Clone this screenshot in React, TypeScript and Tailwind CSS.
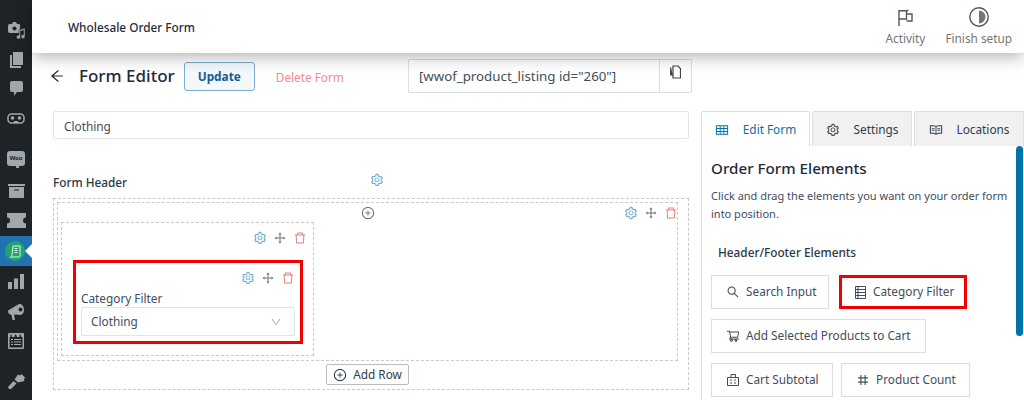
import { ReactNode } from "react";
import {
  AiOutlineArrowLeft,
  AiOutlineDelete,
  AiOutlineDown,
  AiOutlineDrag,
  AiOutlineNumber,
  AiOutlinePlusCircle,
  AiOutlineRead,
  AiOutlineSearch,
  AiOutlineSetting,
  AiOutlineShoppingCart,
  AiOutlineTable,
} from "react-icons/ai";

const grey = "#a3a7ab";

const SideItem = ({ h, children }: { h: string; children: ReactNode }) => (
  <div className={`${h} flex items-center justify-center`}>{children}</div>
);

const Sidebar = () => (
  <aside className="w-8 h-full shrink-0 bg-[#1d2327] pt-4">
    <SideItem h="h-[29px]">
      <svg width="19" height="17" viewBox="0 0 19 17" fill={grey}>
        <path d="M3 2h2l1-2h3l1 2h2a1 1 0 0 1 1 1v7a1 1 0 0 1-1 1H3a2 2 0 0 1-2-2V4a2 2 0 0 1 2-2z" />
        <circle cx="7.5" cy="6.5" r="2" fill="#1d2327" />
        <path d="M12 8l6-2v8.5a2 2 0 1 1-1.5-1.8V8.3L13.500 9.300V15a2 2 0 1 1-1.500-1.800z" stroke="#1d2327" strokeWidth=".5" />
      </svg>
    </SideItem>
    <SideItem h="h-[29px]">
      <svg width="13" height="16" viewBox="0 0 13 16" fill={grey}>
        <rect x="3" width="10" height="13" />
        <path d="M0 3h2v11h9v2H0z" />
      </svg>
    </SideItem>
    <SideItem h="h-[29px]">
      <svg width="13" height="15" viewBox="0 0 13 15" fill={grey}>
        <path d="M2 0h9a2 2 0 0 1 2 2v7a2 2 0 0 1-2 2H7l-3 4v-4H2a2 2 0 0 1-2-2V2a2 2 0 0 1 2-2z" />
      </svg>
    </SideItem>
    <SideItem h="h-[30px]">
      <svg width="18" height="11" viewBox="0 0 18 11">
        <rect x="1" y="1" width="16" height="9" rx="3.500" fill="none" stroke={grey} strokeWidth="1.500" />
        <circle cx="5.500" cy="5" r="1.800" fill={grey} />
        <circle cx="12.500" cy="5" r="1.800" fill={grey} />
        <path d="M7 8h4v2H7z" fill={grey} />
      </svg>
    </SideItem>
    <div className="h-[11px]" />
    <SideItem h="h-[28px]">
      <div className="relative flex h-[15px] w-[18px] items-center justify-center rounded-[3px] bg-[#a3a7ab]">
        <span className="text-[6px] font-bold leading-none text-[#1d2327]">Woo</span>
        <span className="absolute -bottom-[2px] left-[9px] h-[3px] w-[3px] bg-[#a3a7ab]" />
      </div>
    </SideItem>
    <div className="h-[4px]" />
    <SideItem h="h-[29px]">
      <svg width="17" height="14" viewBox="0 0 17 14" fill={grey}>
        <rect width="17" height="2" />
        <path d="M1 3h15v11H1z" />
        <rect x="6" y="5.500" width="5" height="1" fill="#1d2327" />
      </svg>
    </SideItem>
    <SideItem h="h-[31px]">
      <svg width="19" height="15" viewBox="0 0 19 15" fill={grey}>
        <path d="M0 0h19v4.500a3 3 0 0 0 0 6V15H0v-4.500a3 3 0 0 0 0-6z" />
      </svg>
    </SideItem>
    <div className="relative flex h-[30px] items-center justify-center bg-[#2271b1]">
      <div className="flex h-5 w-5 -translate-x-[1px] items-center justify-center rounded-full bg-[#1fa56f]">
        <svg width="12" height="13" viewBox="0 0 12 13" fill="none" stroke="#dff5ea" strokeWidth="1">
          <path d="M4 1h7v8a2 2 0 0 1-2 3H1.500c1-.5 1.500-1 1.500-2zM5.500 3.500h3M5.500 5.500h3M5.500 7.500h3" />
        </svg>
      </div>
      <span className="absolute right-0 top-[8px] h-0 w-0 border-y-[7px] border-r-[7px] border-y-transparent border-r-white" />
    </div>
    <SideItem h="h-[30px]">
      <svg width="16" height="15" viewBox="0 0 16 15" fill={grey}>
        <rect y="8" width="4" height="7" />
        <rect x="6" y="4.500" width="4" height="10.500" />
        <rect x="12" width="4" height="15" />
      </svg>
    </SideItem>
    <SideItem h="h-[30px]">
      <svg width="17" height="17" viewBox="0 0 17 17" fill={grey}>
        <path d="M0 7.500 11 1a4.500 5.500 0 0 1 5 5.500A4.500 5.500 0 0 1 12 12l-4-.5-2 .5 1 5H4.500L3.500 12 .5 10.500z" />
        <circle cx="12.500" cy="6.500" r="2" fill="#1d2327" />
      </svg>
    </SideItem>
    <SideItem h="h-[29px]">
      <svg width="16" height="16" viewBox="0 0 16 16" fill={grey}>
        <path fillRule="evenodd" d="M1 0h14a1 1 0 0 1 1 1v14a1 1 0 0 1-1 1H1a1 1 0 0 1-1-1V1a1 1 0 0 1 1-1zm.5 4v10.500h13V4h-1l-1-2.500h-1L11.500 4H9L8 1.500H7L6.500 4H4L3.500 1.500h-1L2.500 4z" />
        <path d="M3 6h2v1H3zM6 6h7v1H6zM3 8.500h2v1H3zM6 8.500h7v1H6zM3 11h2v1H3zM6 11h7v1H6z" />
      </svg>
    </SideItem>
    <div className="h-[11px]" />
    <SideItem h="h-[30px]">
      <svg width="17" height="16" viewBox="0 0 17 16" fill={grey}>
        <path d="M0 14 5.500 8l3 2.500L3 16H1z" />
        <path d="M6.500 6.500 10 1.500l2 1 1.500-1.500L17 4.500l-1 2 .5 1.500-6.500 1.500z" />
      </svg>
    </SideItem>
  </aside>
);

const TopBar = () => (
  <header className="relative z-10 flex h-[53px] shrink-0 items-start justify-between bg-white pl-9 pr-3 shadow-[0_3px_16px_rgba(0,0,0,0.32)]">
    <span className="mt-[18px] text-[11.8px] font-medium leading-[18px] text-[#1e2b3a]">Wholesale Order Form</span>
    <div className="flex gap-[20px] pt-[6px] text-[11.8px] leading-[12px] text-[#757575]">
      <div className="flex flex-col items-center">
        <div className="flex h-[22px] items-center">
          <svg width="15" height="17" viewBox="0 0 15 17" fill="none" stroke="#50575e" strokeWidth="1.400">
            <path d="M1 17V1.700h7.500v3.300h5.500v7H8.500" />
            <path d="M1 10h7.500V5" />
            <circle cx="9.500" cy="1.500" r="1" fill="#d63638" stroke="none" />
          </svg>
        </div>
        <span className="mt-[4px]">Activity</span>
      </div>
      <div className="flex flex-col items-center">
        <div className="flex h-[22px] items-center">
          <svg width="20" height="20" viewBox="0 0 20 20">
            <circle cx="10" cy="10" r="9.200" fill="none" stroke="#50575e" strokeWidth="1.400" />
            <path d="M10 3.500a6.500 6.500 0 0 1 0 13z" fill="#757575" />
          </svg>
        </div>
        <span className="mt-[4px]">Finish setup</span>
      </div>
    </div>
  </header>
);

const ItemTools = () => (
  <div className="flex items-center gap-[6px]">
    <AiOutlineSetting size={14} className="text-[#62a9c9]" />
    <AiOutlineDrag size={14} className="text-[#6f7478]" />
    <AiOutlineDelete size={14} className="text-[#e08080]" />
  </div>
);

const Element = ({ icon, label, w, red = false }: { icon: ReactNode; label: string; w: string; red?: boolean }) => (
  <div
    className={`${w} flex h-[34px] items-center bg-white text-[11.8px] text-[#3f4d5c] ${
      red ? "gap-[7px] border-[3px] border-[#f00000] pl-[13px]" : "gap-[6px] border border-[#dcdfe2] pl-[14px]"
    }`}
  >
    {icon}
    <span>{label}</span>
  </div>
);

const Editor = () => (
  <div className="w-[636px] shrink-0">
    <div className="h-[28px] rounded-[2px] border border-[#e2e4e7] bg-white pl-[10px] pt-[1px] text-[11.8px] leading-[26px] text-[#3f4d5c]">
      Clothing
    </div>
    <div className="mt-[35px] flex h-[16px] items-center text-[11.8px] font-medium text-[#2b3744]">
      <span className="w-[317px] pt-[2px]">Form Header</span>
      <AiOutlineSetting size={14} className="-mt-[4px] text-[#62a9c9]" />
    </div>
    <div className="mt-[8px] h-[192px] border border-dashed border-[#c9c9c9] p-[3px]">
      <div className="h-[159px] w-[621px] border border-dashed border-[#c9c9c9] pl-[3px]">
        <div className="flex h-[19px] items-center justify-end">
          <AiOutlinePlusCircle size={14} className="mr-[249px] text-[#6f7478]" />
          <div className="-mr-[1px]">
            <ItemTools />
          </div>
        </div>
        <div className="h-[134px] w-[253px] border border-dashed border-[#c9c9c9] pl-[11px]">
          <div className="flex h-[37px] items-center justify-end pb-[7px] pr-[6px]">
            <ItemTools />
          </div>
          <div className="h-[84px] w-[230px] border-[3px] border-[#f00000] px-[5px]">
            <div className="flex h-[27px] items-center justify-end pt-[3px]">
              <ItemTools />
            </div>
            <div className="text-[11.8px] leading-[16px] text-[#3f4d5c]">Category Filter</div>
            <div className="mt-[1px] flex h-[29px] items-center justify-between rounded-[2px] border border-[#e2e4e7] pl-[9px] pr-[12px] text-[11.8px] text-[#3f4d5c]">
              <span className="pt-[1px]">Clothing</span>
              <AiOutlineDown size={12} className="text-[#a8adb1]" />
            </div>
          </div>
        </div>
      </div>
      <div className="mt-[3px] flex justify-center">
        <div className="ml-[-7px] flex h-[21px] w-[83px] items-center justify-center gap-[6px] rounded-[2px] border border-[#b9bdc1] text-[11.8px] text-[#2f3d4d]">
          <AiOutlinePlusCircle size={14} />
          Add Row
        </div>
      </div>
    </div>
  </div>
);

const Tab = ({ icon, label, w, active = false }: { icon: ReactNode; label: string; w: string; active?: boolean }) => (
  <div
    className={`${w} flex h-[35px] items-center justify-center gap-[14px] rounded-t-[2px] border border-b-0 border-[#dcdfe2] pt-[1px] text-[11.8px] ${
      active ? "bg-white text-[#0073aa]" : "bg-[#f1f1f1] text-[#2f3d4d]"
    }`}
  >
    {icon}
    {label}
  </div>
);

const Panel = () => (
  <div className="w-[323px] shrink-0">
    <div className="flex gap-[2px]">
      <Tab active w="w-[109px]" label="Edit Form" icon={<AiOutlineTable size={14} />} />
      <Tab w="w-[100px]" label="Settings" icon={<AiOutlineSetting size={14} />} />
      <Tab w="w-[110px]" label="Locations" icon={<AiOutlineRead size={14} />} />
    </div>
    <div className="relative h-[260px] border-l border-[#dcdfe2] pl-[9px] pt-[11px]">
      <span className="absolute right-[1px] top-0 h-[190px] w-[7px] rounded-full bg-[#0073aa]" />
      <h2 className="text-[15.200px] font-medium leading-[22px] text-[#1e2b3a]">Order Form Elements</h2>
      <p className="mt-[8px] w-[300px] text-[11px] leading-[18px] text-[#3f4d5c]">
        Click and drag the elements you want on your order form into position.
      </p>
      <div className="mt-[20px] pl-[7px] text-[11.8px] font-medium leading-[18px] text-[#2b3744]">Header/Footer Elements</div>
      <div className="mt-[14px] flex gap-[10px]">
        <Element w="w-[118px]" label="Search Input" icon={<AiOutlineSearch size={14} />} />
        <Element
          red
          w="w-[128px]"
          label="Category Filter"
          icon={
            <svg width="11" height="13" viewBox="0 0 11 13" fill="none" stroke="#3f4d5c" strokeWidth="1">
              <path d="M.500.500h10v12H.500zM.500 3.500h10M.500 6.500h10M.500 9.500h10M3 .500v12" />
            </svg>
          }
        />
      </div>
      <div className="mt-[10px]">
        <Element w="w-[215px]" label="Add Selected Products to Cart" icon={<AiOutlineShoppingCart size={14} />} />
      </div>
      <div className="mt-[10px] flex gap-[8px]">
        <Element
          w="w-[122px]"
          label="Cart Subtotal"
          icon={
            <svg width="14" height="14" viewBox="0 0 14 14" fill="none" stroke="#3f4d5c" strokeWidth="1">
              <path d="M1.500 4.500h11v8h-11zM5 4.500v-3h4.500v3M4 7h2M8 7h2M4 10h2M8 10h2" />
            </svg>
          }
        />
        <Element w="w-[129px]" label="Product Count" icon={<AiOutlineNumber size={14} />} />
      </div>
    </div>
  </div>
);

export default function App() {
  return (
    <div className="flex h-[400px] w-[1024px] overflow-hidden bg-white font-['Noto_Sans',sans-serif]">
      <Sidebar />
      <main className="flex min-w-0 flex-1 flex-col">
        <TopBar />
        <div className="flex h-[40px] items-start pl-[17px] pt-[6px]">
          <AiOutlineArrowLeft size={16} className="mt-[9px] text-[#1e2b3a]" />
          <span className="ml-[14px] mt-[5px] text-[17px] font-medium leading-[24px] text-[#1e2b3a]">Form Editor</span>
          <div className="ml-[9px] mt-[3px] flex h-[29px] w-[71px] items-center justify-center rounded-[3px] border border-[#79add0] bg-[#f5f8fa] text-[11.8px] font-bold text-[#135e96]">
            Update
          </div>
          <span className="ml-[21px] mt-[9px] text-[11.8px] leading-[18px] text-[#f58a8e]">Delete Form</span>
          <div className="ml-[64px] flex h-[34px] w-[284px] rounded-[2px] border border-[#dcdfe2] bg-white text-[13.300px] leading-[32px] text-[#3f4d5c]">
            <span className="w-[251px] border-r border-[#dcdfe2] pl-[10px]">[wwof_product_listing id="260"]</span>
            <div className="flex flex-1 justify-center pt-[5px]">
              <svg width="11" height="14" viewBox="0 0 11 14" fill="none" stroke="#3c434a" strokeWidth="1.200">
                <path d="M3 1h5l2.500 2.500V13H3z" />
                <path d="M.700 2.500v7.500H3" fill="#3c434a" />
              </svg>
            </div>
          </div>
        </div>
        <div className="mt-[18px] flex gap-[12px] pl-[21px]">
          <Editor />
          <Panel />
        </div>
      </main>
    </div>
  );
}
